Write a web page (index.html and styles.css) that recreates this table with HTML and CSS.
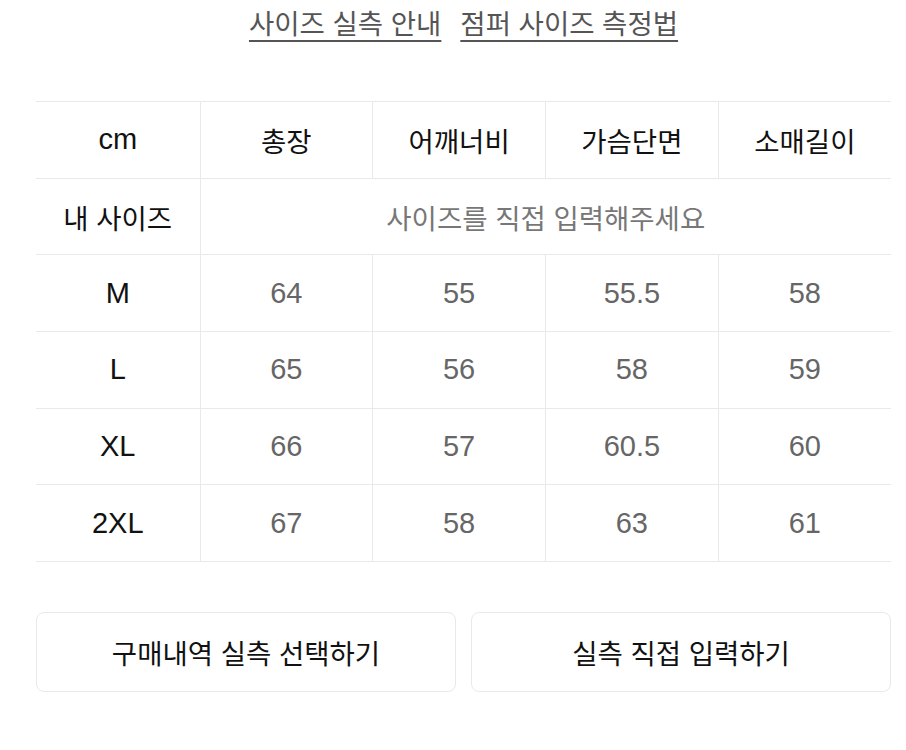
FILE: index.html
```html
<!DOCTYPE html>
<html lang="ko">
<head>
<meta charset="utf-8">
<link rel="stylesheet" href="styles.css">
</head>
<body>
<div class="page">
  <nav class="links">
    <a href="#" class="link">사이즈 실측 안내</a>
    <a href="#" class="link">점퍼 사이즈 측정법</a>
  </nav>
  <table class="size-table">
    <colgroup>
      <col class="c-first">
      <col><col><col><col>
    </colgroup>
    <thead>
      <tr>
        <th class="num">cm</th><th>총장</th><th>어깨너비</th><th>가슴단면</th><th>소매길이</th>
      </tr>
    </thead>
    <tbody>
      <tr>
        <th>내 사이즈</th>
        <td colspan="4" class="placeholder">사이즈를 직접 입력해주세요</td>
      </tr>
      <tr><th class="num">M</th><td class="num">64</td><td class="num">55</td><td class="num">55.5</td><td class="num">58</td></tr>
      <tr><th class="num">L</th><td class="num">65</td><td class="num">56</td><td class="num">58</td><td class="num">59</td></tr>
      <tr><th class="num">XL</th><td class="num">66</td><td class="num">57</td><td class="num">60.5</td><td class="num">60</td></tr>
      <tr><th class="num">2XL</th><td class="num">67</td><td class="num">58</td><td class="num">63</td><td class="num">61</td></tr>
    </tbody>
  </table>
  <div class="actions">
    <button class="btn">구매내역 실측 선택하기</button>
    <button class="btn">실측 직접 입력하기</button>
  </div>
</div>
</body>
</html>
```
FILE: styles.css
```css
* { box-sizing: border-box; }
html, body {
  margin: 0;
  background: #fff;
}
body {
  font-family: "Liberation Sans", "Noto Sans CJK KR", sans-serif;
  color: #111;
}
.page {
  padding: 0 15px 0 36px;
}
.links {
  display: flex;
  justify-content: center;
  gap: 19px;
  height: 101px;
  padding-top: 6px;
}
.link {
  font-size: 27.5px;
  line-height: 38px;
  height: 38px;
  color: #555;
  text-decoration: underline;
  text-decoration-thickness: 2px;
  text-underline-offset: 6px;
}
.size-table {
  width: 855px;
  border-collapse: collapse;
  table-layout: fixed;
}
.c-first { width: 164px; }
.size-table th,
.size-table td {
  height: 76.7px;
  padding: 0;
  text-align: center;
  vertical-align: middle;
  font-size: 27.5px;
  border-top: 1.5px solid #ebe8ea;
  border-bottom: 1.5px solid #ebe8ea;
  border-left: 1.5px solid #ebe8ea;
}
.size-table .num { font-size: 29px; }
.size-table th { font-weight: normal; color: #111; }
.size-table td { color: #666; }
.size-table tr > :first-child { border-left: none; }
.size-table .placeholder { color: #777; }
.actions {
  display: flex;
  gap: 15px;
  margin-top: 50px;
}
.btn {
  flex: 1;
  height: 80px;
  background: #fff;
  border: 1.5px solid #ebe8ea;
  border-radius: 8px;
  font-family: "Liberation Sans", "Noto Sans CJK KR", sans-serif;
  font-size: 27.5px;
  color: #111;
}
```
